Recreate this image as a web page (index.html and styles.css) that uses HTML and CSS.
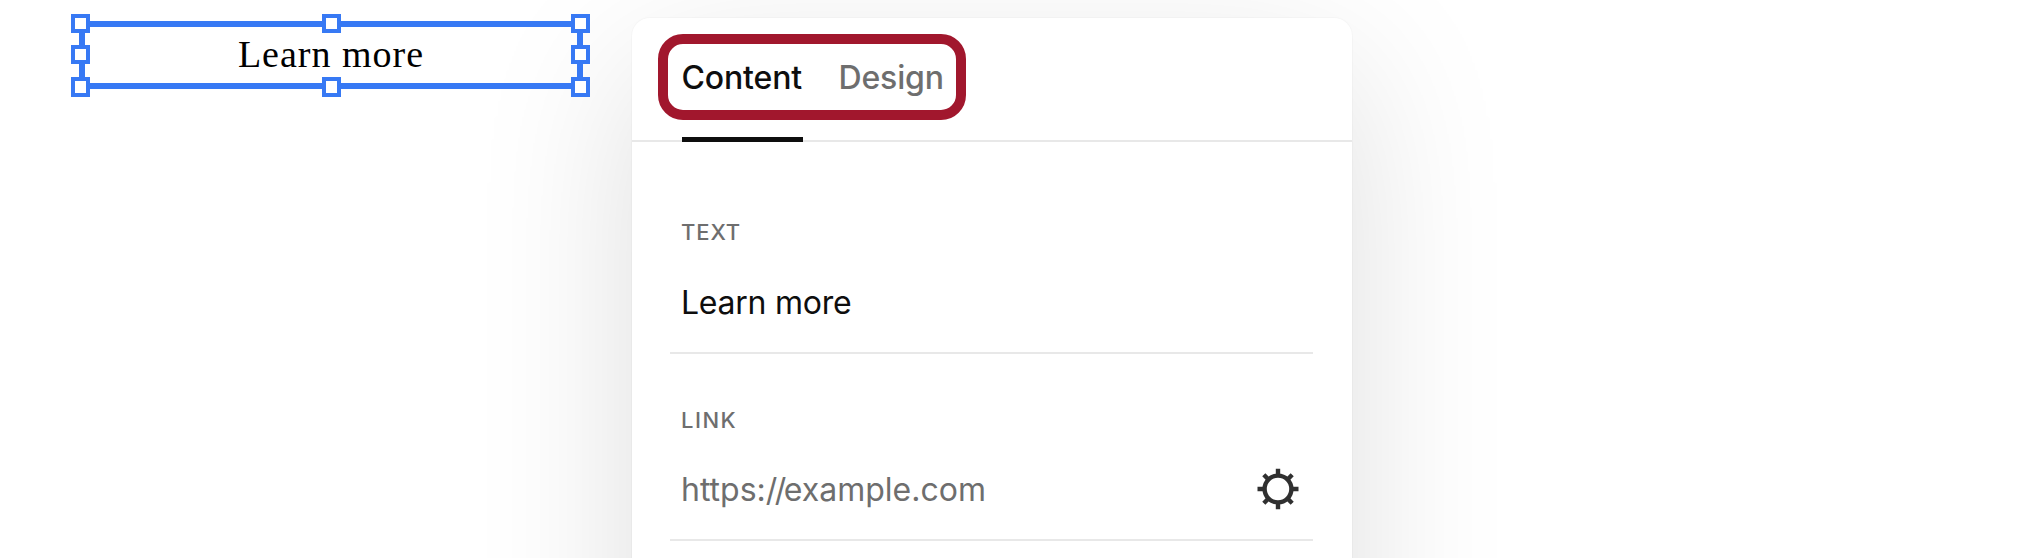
FILE: index.html
```
<!DOCTYPE html>
<html lang="en">
  <head>
    <meta charset="UTF-8">
    <title>Button editor</title>
    <link rel="stylesheet" href="styles.css">
  </head>
  <body>
    <main class="editor">
      <div class="selection">
        <span class="selection-label">Learn more</span>
        <i class="handle left top"></i>
        <i class="handle center top"></i>
        <i class="handle right top"></i>
        <i class="handle left middle"></i>
        <i class="handle right middle"></i>
        <i class="handle left bottom"></i>
        <i class="handle center bottom"></i>
        <i class="handle right bottom"></i>
      </div>

      <section class="panel">
        <nav class="tabs">
          <span class="tab active">Content</span>
          <span class="tab design">Design</span>
          <span class="highlight"></span>
        </nav>
        <div class="field">
          <div class="label text-label">TEXT</div>
          <div class="row">
            <span class="value">Learn more</span>
          </div>
        </div>
        <div class="field">
          <div class="label link-label">LINK</div>
          <div class="row">
            <span class="value placeholder">https:<span class="slashes">//</span>example.com</span>
            <svg class="gear" width="42" height="42" viewBox="-21 -21 42 42" fill="none" stroke="#303030">
              <circle r="13.4" stroke-width="4.4"/>
              <path stroke-width="4.4" d="M0-20.3V-14M0 14V20.3M-20.5 0H-14M14 0H20.5M-14.2-14.2L-10-10M14.2-14.2L10-10M-14.2 14.2L-10 10M14.2 14.2L10 10"/>
            </svg>
          </div>
        </div>
      </section>
    </main>
  </body>
</html>
```
FILE: styles.css
```
* {
  box-sizing: border-box;
}
body {
  margin: 0;
  height: 558px;
  overflow: hidden;
  background: #fff;
  font-family: Inter, "Liberation Sans", sans-serif;
}
.editor {
  display: flex;
  align-items: flex-start;
  height: 558px;
  padding-left: 79px;
  overflow: hidden;
}
.selection {
  position: relative;
  z-index: 1;
  display: flex;
  align-items: center;
  justify-content: center;
  width: 504px;
  height: 68px;
  margin-top: 21px;
  border: 6px solid #3779f4;
}
.selection-label {
  padding-bottom: 2px;
  font-family: "Liberation Serif", serif;
  font-size: 38px;
  line-height: 44px;
  letter-spacing: 1px;
  color: #000;
}

/* resize handles sit on top of the selection border */
.handle {
  position: absolute;
  width: 19px;
  height: 19px;
  border: 4px solid #3779f4;
  background: #fff;
}
.left { left: -14px; }
.center { left: 237px; }
.right { right: -13px; }
.top { top: -13px; }
.middle { top: 18px; }
.bottom {
  bottom: -14px;
  height: 20px;
}

.panel {
  width: 720px;
  height: 760px;
  margin: 18px 0 0 49px;
  border-radius: 18px;
  background: #fff;
  box-shadow: 0 0 0 1px rgba(0, 0, 0, 0.02), 0 50px 160px rgba(0, 0, 0, 0.135);
}
.tabs {
  position: relative;
  display: flex;
  gap: 36px;
  height: 124px;
  padding-left: 50px;
  border-bottom: 2px solid #e8e8e8;
}
.tab {
  height: 124px;
  padding-top: 40px;
  font-size: 32px;
  font-weight: 500;
  line-height: 40px;
  letter-spacing: -0.15px;
  text-indent: -0.5px;
  color: #6e6e6e;
}
.tab.active {
  width: 121px;
  color: #0e0e0e;
  border-bottom: 5px solid #0e0e0e;
}
.highlight {
  position: absolute;
  left: 26px;
  top: 16px;
  width: 308px;
  height: 86px;
  border: 10px solid #a1172d;
  border-radius: 25px;
}
.field {
  height: 187px;
  margin: 0 39px 0 38px;
  padding: 0 14px 0 11px;
  border-bottom: 2px solid #e8e8e8;
}
.tabs + .field {
  height: 212px;
  padding-top: 25px;
}
.label {
  padding-top: 51px;
  font-size: 22px;
  font-weight: 500;
  line-height: 28px;
  letter-spacing: 1.5px;
  color: #6e6e6e;
}
.text-label {
  letter-spacing: 0.9px;
}
.link-label {
  padding-top: 52px;
}
.row {
  display: flex;
  align-items: center;
  justify-content: space-between;
  height: 42px;
  margin-top: 35px;
}
.link-label + .row {
  margin-top: 34px;
}
.value {
  font-size: 32px;
  letter-spacing: -0.25px;
  color: #0e0e0e;
}
.placeholder {
  letter-spacing: 0;
  color: #6e6e6e;
}
.slashes {
  letter-spacing: -2.5px;
}
```
